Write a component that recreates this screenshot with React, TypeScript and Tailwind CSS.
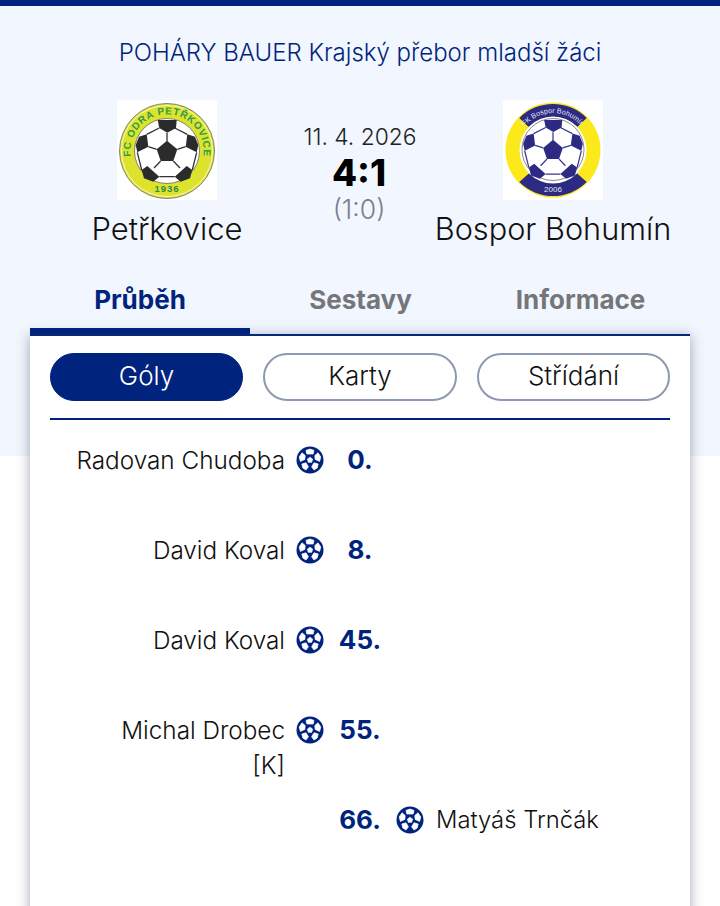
const BallIcon = () => (
  <svg width="28" height="28" viewBox="0 0 28 28" className="shrink-0">
    <circle cx="14" cy="14" r="13.5" fill="#00247d" />
    <g fill="#fff" stroke="#fff" strokeWidth="0.7" strokeLinejoin="round">
      <polygon points="14,3 18,4.4 17.2,8 10.8,8 10,4.4" />
      <polygon points="3.2,11 6,6.8 9.2,9.6 8.8,13.4 4.4,15.4" />
      <polygon points="24.8,11 22,6.8 18.8,9.6 19.2,13.4 23.6,15.4" />
      <polygon points="5.8,18 10,16.8 12.4,20.8 10,24 6.8,22" />
      <polygon points="22.2,18 18,16.8 15.6,20.8 18,24 21.2,22" />
      <polygon points="14,11 16.8,13.2 15.8,16.4 12.2,16.4 11.2,13.2" strokeWidth="0.4" />
    </g>
  </svg>
);

// coordinates of the ball patches, drawn around a centre of 0,0 with radius 32.5
const Ball = ({ fill, seam, cy, r }: { fill: string; seam: string; cy: number; r: number }) => (
  <g transform={`translate(50 ${cy}) scale(${r / 32.5})`}>
    <circle r="32.5" fill="#fff" stroke="#666" strokeWidth="0.8" />
    <g stroke={seam} strokeWidth="1.3" fill="none">
      <path d="M0 -10 L0 -18 M10.3 -1.7 L18.7 -4.3 M-10.3 -1.7 L-18.7 -4.3 M6.3 10 L13 17 M-6.3 10 L-13 17" />
      <path d="M-7.7 -23 L-20.3 -16.7 M7.7 -23 L20.3 -16.7 M-29.7 1.3 L-25.3 19 M29.7 1.3 L25.3 19 M-7.7 25.7 L7.7 25.7" />
    </g>
    <g fill={fill}>
      <polygon points="0,-10.3 10.3,-1.7 6.3,10 -6.3,10 -10.3,-1.7" />
      <polygon points="-9.3,-31 9.7,-31 9,-23 0.3,-18.3 -7.7,-23" />
      <polygon points="-20.3,-16.7 -18.7,-4.3 -29.7,1.3 -31.3,-6 -28,-14.3" />
      <polygon points="20.3,-16.7 18.7,-4.3 29.7,1.3 31.3,-6 28,-14.3" />
      <polygon points="-19.7,15 -7.7,25.7 -13.7,30.7 -23,27.3 -25.3,19" />
      <polygon points="19.7,15 7.7,25.7 13.7,30.7 23,27.3 25.3,19" />
    </g>
  </g>
);

const PetrkoviceLogo = () => (
  <svg width="100" height="100" viewBox="0 0 100 100" className="shrink-0 bg-white">
    <circle cx="50" cy="51" r="47.5" fill="#dde32c" stroke="#777" strokeWidth="0.9" />
    <circle cx="50" cy="51" r="45.6" fill="none" stroke="#fff" strokeWidth="0.7" />
    <defs>
      <path id="petArc" d="M 16.8 66 A 36.5 36.5 0 1 1 83.2 66" />
    </defs>
    <text fontFamily="Liberation Sans, sans-serif" fontSize="10" fontWeight="700" fill="#2f9c4c" letterSpacing="0.7">
      <textPath href="#petArc" startOffset="50%" textAnchor="middle">FC ODRA PETŘKOVICE</textPath>
    </text>
    <Ball fill="#2b2b2b" seam="#333" cy={51} r={32.5} />
    <text x="50" y="92" textAnchor="middle" fontFamily="Liberation Sans, sans-serif" fontSize="9.5" fontWeight="700" fill="#2f8a4a" letterSpacing="1">1936</text>
  </svg>
);

const BohuminLogo = () => (
  <svg width="100" height="100" viewBox="0 0 100 100" className="shrink-0 bg-white">
    <circle cx="50" cy="50" r="47.5" fill="#fbe91c" />
    <path d="M16.3 18 A47.5 47.5 0 0 1 83.7 18 L73 28.3 A33 33 0 0 0 27 28.3 Z" fill="#2d2a84" />
    <path d="M16.3 82 A47.5 47.5 0 0 0 83.7 82 L72 71.5 A33 33 0 0 1 28 71.5 Z" fill="#2d2a84" />
    <circle cx="50" cy="50" r="33.5" fill="#fff" />
    <defs>
      <path id="bohArc" d="M 17 33.3 A 37 37 0 0 1 83 33.3" />
    </defs>
    <text fontFamily="Liberation Sans, sans-serif" fontSize="7.2" fill="#e4e4f2">
      <textPath href="#bohArc" startOffset="50%" textAnchor="middle">FK Bospor Bohumín</textPath>
    </text>
    <Ball fill="#2d2a84" seam="#3a3790" cy={49.5} r={31} />
    <text x="50" y="92" textAnchor="middle" fontFamily="Liberation Sans, sans-serif" fontSize="8" fill="#e4e4f2">2006</text>
  </svg>
);

const goals = [
  { minute: "0.", home: "Radovan Chudoba" },
  { minute: "8.", home: "David Koval" },
  { minute: "45.", home: "David Koval" },
  { minute: "55.", home: "Michal Drobec", note: "[K]" },
  { minute: "66.", away: "Matyáš Trnčák" },
];

const GoalRow = ({ minute, home, note, away }: { minute: string; home?: string; note?: string; away?: string }) => (
  <div className="flex h-[90px] items-start text-[24.3px] leading-[34px] font-[350] text-[#111]">
    <div className="w-[235px] text-right">
      {home}
      {note && <div className="mt-px">{note}</div>}
    </div>
    <div className="flex w-[39px] justify-end pt-[3px]">{home && <BallIcon />}</div>
    <div className="w-[72px] text-center text-[26px] font-bold text-[#00247d]">{minute}</div>
    <div className="w-[28px] pt-[3px]">{away && <BallIcon />}</div>
    <div className="pl-3 text-[23.8px]">{away}</div>
  </div>
);

const Pill = ({ label, active, width }: { label: string; active?: boolean; width: string }) => (
  <button
    className={
      (active
        ? "h-12 rounded-3xl border border-[#00247d] bg-[#00247d] pb-[3px] text-[26px] font-[350] text-white "
        : "h-12 rounded-3xl border-2 border-[#8e99b1] bg-white pb-[3px] text-[26px] font-[350] text-[#111] ") + width
    }
  >
    {label}
  </button>
);

export default function App() {
  return (
    <div className="h-[906px] overflow-hidden bg-white font-['Inter',sans-serif]">
      <div className="h-[456px] border-t-[6px] border-[#00247d] bg-[#f2f6fe] px-[30px]">
        <h2 className="pt-[30px] text-center text-[24px] leading-[34px] font-[350] text-[#00247d]">
          POHÁRY BAUER Krajský přebor mladší žáci
        </h2>
        <div className="mt-[30px] flex items-start justify-between">
          <div className="flex w-[274px] shrink-0 flex-col items-center">
            <PetrkoviceLogo />
            <div className="mt-[12px] text-[31px] leading-[34px] font-[350] text-[#111]">Petřkovice</div>
          </div>
          <div className="flex w-[112px] shrink-0 flex-col items-center pt-[22px]">
            <div className="text-[22.8px] leading-[30px] font-[350] whitespace-nowrap text-[#222]">11. 4. 2026</div>
            <div className="pr-[2px] text-[36.5px] leading-[42px] font-extrabold text-black">4:1</div>
            <div className="pr-[2px] text-[26.5px] leading-[30px] font-[350] text-[#7b7f88]">(1:0)</div>
          </div>
          <div className="flex w-[274px] shrink-0 flex-col items-center">
            <BohuminLogo />
            <div className="mt-[12px] text-[30.7px] leading-[34px] font-[350] whitespace-nowrap text-[#111]">Bospor Bohumín</div>
          </div>
        </div>
        <div className="mt-[18px] flex h-[72px] border-b-2 border-[#00247d] text-[26px] leading-[34px] font-bold">
          <div className="w-[220px] border-b-[6px] border-[#00247d] pt-[19px] text-center text-[#00247d]">Průběh</div>
          <div className="w-[220px] pt-[19px] pl-px text-center text-[#75767a]">Sestavy</div>
          <div className="w-[220px] pt-[19px] pl-px text-center text-[#75767a]">Informace</div>
        </div>
        <div className="h-[600px] bg-white px-5 pt-[17px] shadow-[0_0_12px_rgba(50,60,90,0.45)]">
          <div className="flex gap-5">
            <Pill label="Góly" active width="w-[193px]" />
            <Pill label="Karty" width="w-[194px]" />
            <Pill label="Střídání" width="w-[193px]" />
          </div>
          <div className="mt-[17px] h-[2px] bg-[#00247d]" />
          <div className="pt-[23px]">
            {goals.map((g, i) => (
              <GoalRow key={i} {...g} />
            ))}
          </div>
        </div>
      </div>
    </div>
  );
}
